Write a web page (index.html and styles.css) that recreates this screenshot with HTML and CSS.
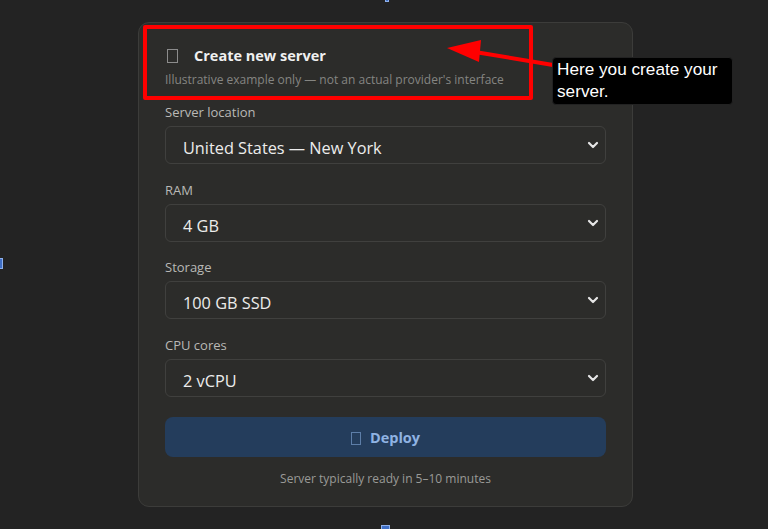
FILE: index.html
```html
<!DOCTYPE html>
<html lang="en">
<head>
<meta charset="UTF-8">
<meta name="viewport" content="width=device-width, initial-scale=1.0">
  <title>Create new server</title>
  <link rel="stylesheet" href="styles.css">
</head>
<body>
  <div class="mark mark-top"></div>
  <div class="mark mark-left"></div>
  <div class="mark mark-bottom"></div>

  <main class="card">
    <!-- header -->
    <div class="card-head">
      <h1><span class="glyph"></span>Create new server</h1>
      <p class="note">Illustrative example only — not an actual provider's interface</p>
    </div>

    <div class="field">
      <label>Server location</label>
      <div class="select">
        <span>United States — New York</span>
        <svg width="12" height="8" viewBox="0 0 12 8"><path d="M2 2l4 4 4-4" fill="none" stroke="#e6e6e6" stroke-width="2.2" stroke-linecap="round" stroke-linejoin="round"/></svg>
      </div>
    </div>
    <div class="field">
      <label>RAM</label>
      <div class="select">
        <span>4 GB</span>
        <svg width="12" height="8" viewBox="0 0 12 8"><path d="M2 2l4 4 4-4" fill="none" stroke="#e6e6e6" stroke-width="2.2" stroke-linecap="round" stroke-linejoin="round"/></svg>
      </div>
    </div>
    <div class="field">
      <label>Storage</label>
      <div class="select">
        <span>100 GB SSD</span>
        <svg width="12" height="8" viewBox="0 0 12 8"><path d="M2 2l4 4 4-4" fill="none" stroke="#e6e6e6" stroke-width="2.2" stroke-linecap="round" stroke-linejoin="round"/></svg>
      </div>
    </div>
    <div class="field">
      <label>CPU cores</label>
      <div class="select">
        <span>2 vCPU</span>
        <svg width="12" height="8" viewBox="0 0 12 8"><path d="M2 2l4 4 4-4" fill="none" stroke="#e6e6e6" stroke-width="2.2" stroke-linecap="round" stroke-linejoin="round"/></svg>
      </div>
    </div>

    <button class="deploy"><span class="glyph small"></span>Deploy</button>
    <p class="hint">Server typically ready in 5–10 minutes</p>

    <!-- annotation -->
    <div class="highlight"></div>
    <svg class="arrow" width="110" height="30" viewBox="0 0 110 30">
      <path d="M108 25 L30 12" stroke="#ff0000" stroke-width="4" fill="none"/>
      <polygon points="2,8 36,0 34,22" fill="#ff0000"/>
    </svg>
    <div class="callout">Here you create your server.</div>
  </main>
</body>
</html>
```

FILE: styles.css
```css
body {
  margin: 0;
  background: #232323;
  font-family: 'Open Sans', 'Noto Sans', sans-serif;
  color: #e6e6e6;
  min-height: 529px;
}

.card {
  position: relative;
  width: 441px;
  margin: 22px 0 0 138px;
  padding: 21px 26px 19px 26px;
  background: #2c2c2a;
  border: 1px solid #3c3c3a;
  border-radius: 11px;
}

.card-head h1 {
  display: flex;
  align-items: center;
  margin: 0;
  font-size: 14.5px;
  font-weight: 700;
  color: #f0f0f0;
  line-height: 24px;
}
.glyph {
  display: inline-block;
  width: 9px;
  height: 12px;
  border: 1px solid #8c8c8c;
  margin: 0 16px 0 2px;
}
.glyph.small {
  width: 8px;
  height: 11px;
  border-color: #5d7ea8;
  margin: 3px 9px 0 0;
}
.note {
  margin: 3px 0 0;
  font-size: 12px;
  color: #858582;
}

.field {
  margin-top: 15px;
}
.field + .field {
  margin-top: 16.7px;
}
.field label {
  display: block;
  font-size: 13px;
  color: #b9b9b6;
  line-height: 18px;
  margin-bottom: 5px;
}
.select {
  display: flex;
  align-items: center;
  justify-content: space-between;
  height: 36px;
  padding: 0 6px 0 17px;
  border: 1px solid #40403e;
  border-radius: 6px;
  font-size: 16.3px;
  color: #ececec;
}
.select span {
  padding-top: 6px;
}

.deploy {
  display: flex;
  align-items: center;
  justify-content: center;
  width: 100%;
  height: 40px;
  margin-top: 20px;
  border: none;
  border-radius: 8px;
  background: #243d5c;
  color: #8fb3e3;
  font-family: inherit;
  font-size: 14.5px;
  font-weight: 700;
}
.hint {
  margin: 13px 0 0;
  text-align: center;
  font-size: 12px;
  color: #9a9a97;
}

.highlight {
  position: absolute;
  left: 4px;
  top: 2px;
  width: 382px;
  height: 67px;
  border: 4px solid #ff0000;
  border-radius: 2px;
}
.arrow {
  position: absolute;
  left: 306px;
  top: 17px;
}
.callout {
  position: absolute;
  left: 413px;
  top: 34px;
  width: 168px;
  padding: 0 7px 2px 4px;
  background: #000;
  border: 1px solid #222;
  border-radius: 4px;
  font-family: 'Liberation Sans', Arial, sans-serif;
  font-size: 17.2px;
  line-height: 22px;
  color: #fff;
}

.mark {
  position: absolute;
  background: #3f6fc6;
  border: 1px solid #8fb0ea;
}
.mark-top {
  left: 385px;
  top: -2px;
  width: 2px;
  height: 2px;
}
.mark-left {
  left: -2px;
  top: 258px;
  width: 3px;
  height: 9px;
}
.mark-bottom {
  left: 381px;
  top: 525px;
  width: 7px;
  height: 6px;
}
```
